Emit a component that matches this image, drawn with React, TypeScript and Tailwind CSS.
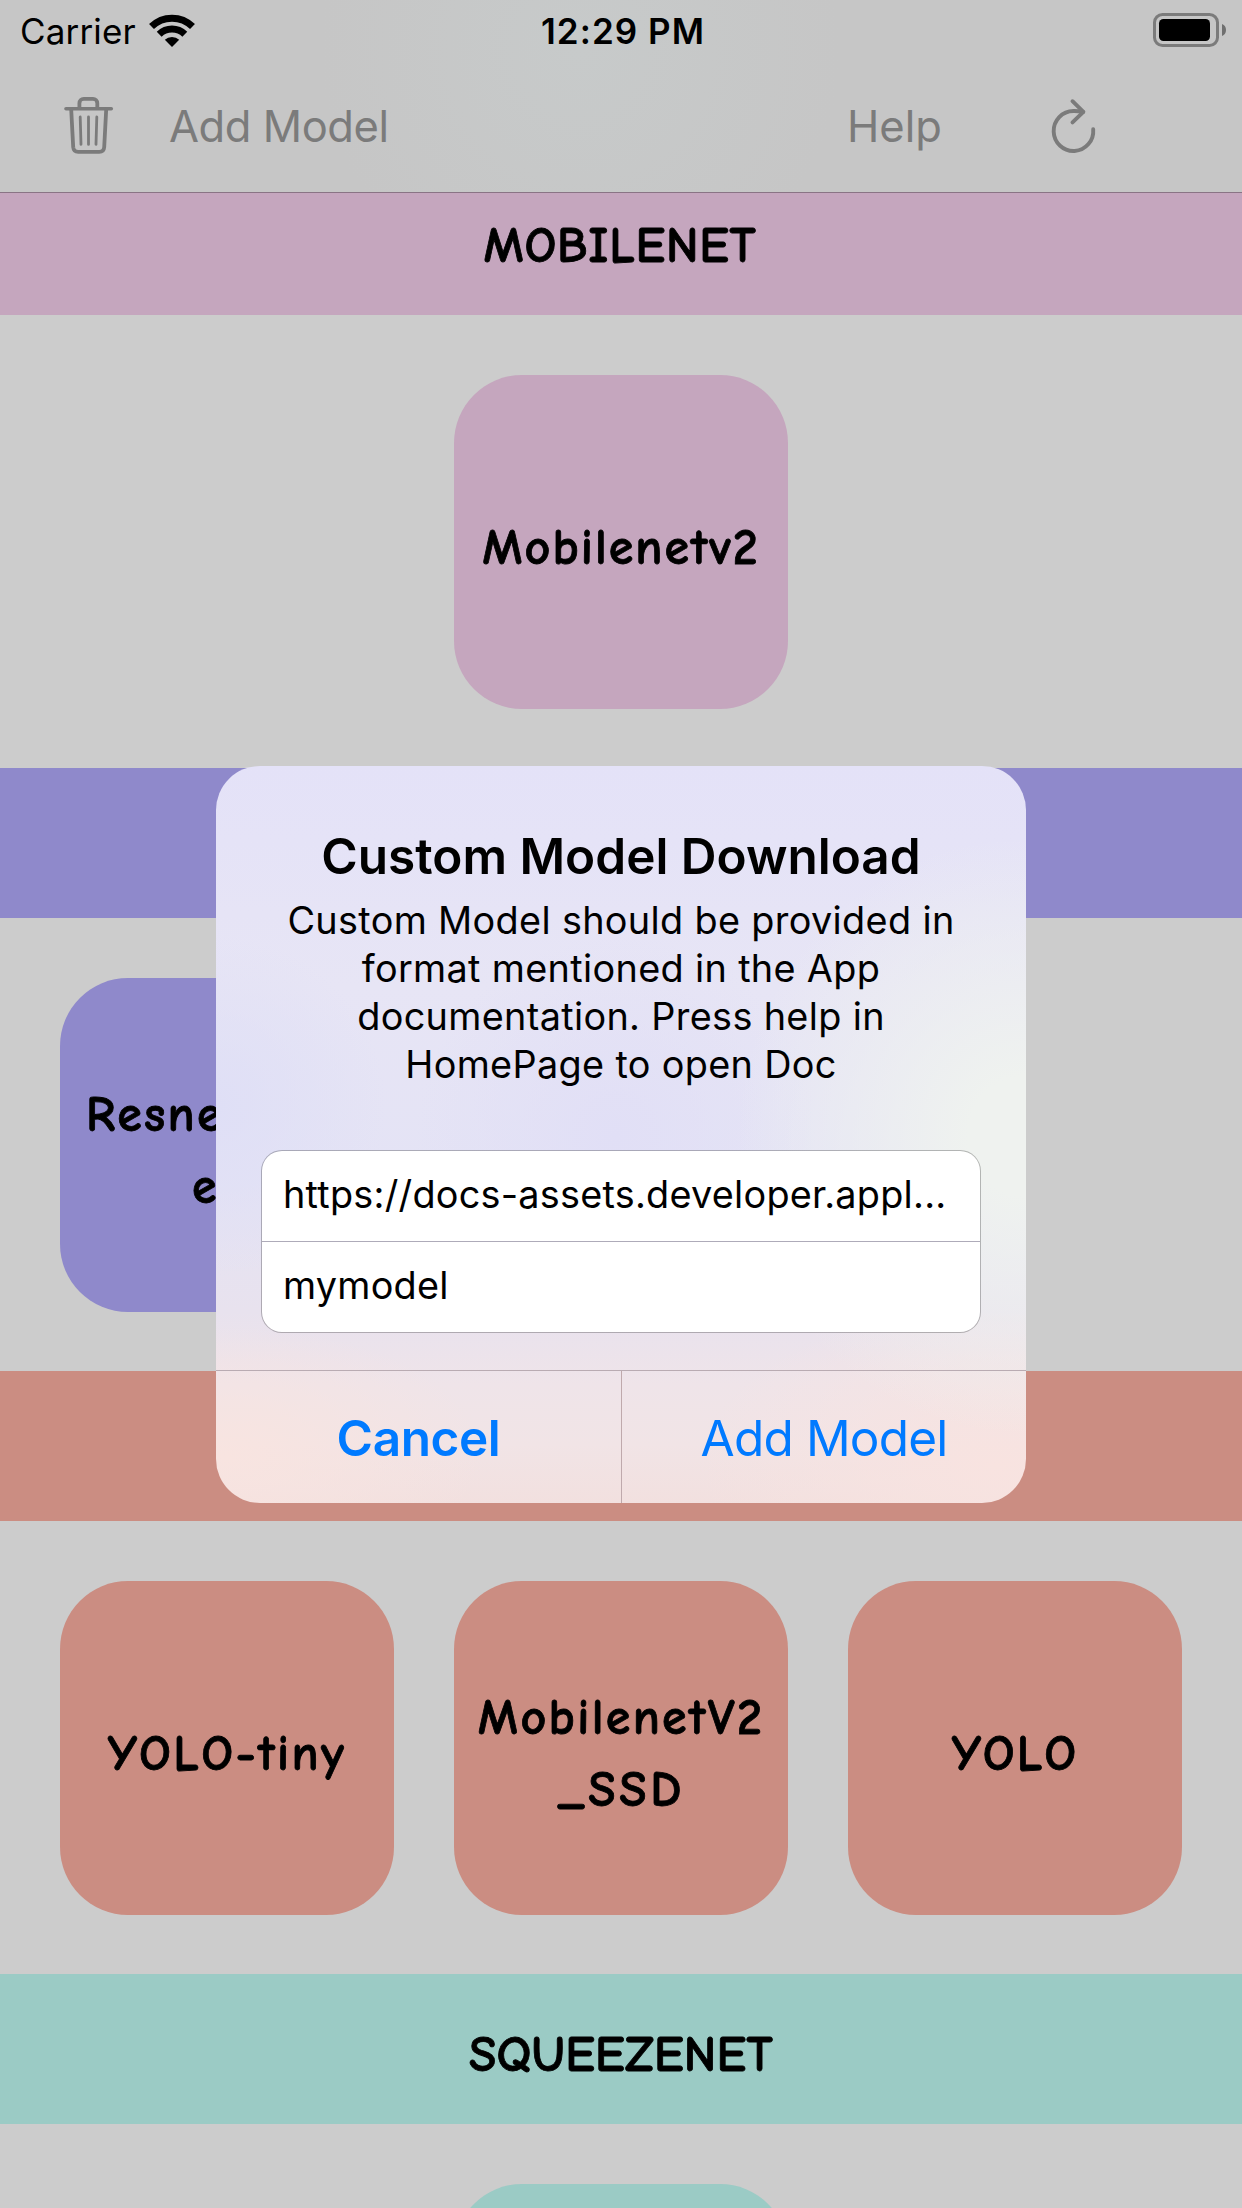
import React from "react";

type Label = { text: string; spacing: string };
type Model = { id: string; lines: Label[]; leading?: boolean };
type Section = {
  id: string;
  title?: Label;
  color: string;
  header: string;
  models: Model[];
};

const sections: Section[] = [
  {
    id: "mobilenet",
    title: { text: "MOBILENET", spacing: "tracking-[0.68px] pr-0.5" },
    color: "bg-[#c5a6be]",
    header: "h-[122px] pb-[17px]",
    models: [{ id: "mobilenetv2", lines: [{ text: "Mobilenetv2", spacing: "tracking-[2.03px]" }] }],
  },
  {
    id: "resnet",
    color: "bg-[#8f89cb]",
    header: "h-[150px]",
    models: [
      {
        id: "resnet",
        leading: true,
        lines: [
          { text: "Resne", spacing: "pl-[26px] tracking-[2.2px]" },
          { text: "e", spacing: "pl-[132px]" },
        ],
      },
    ],
  },
  {
    id: "yolo",
    color: "bg-[#cb8d82]",
    header: "h-[150px]",
    models: [
      { id: "yolo-tiny", lines: [{ text: "YOLO-tiny", spacing: "tracking-[2.35px]" }] },
      {
        id: "mobilenetv2-ssd",
        lines: [
          { text: "MobilenetV2", spacing: "tracking-[2.32px]" },
          { text: "_SSD", spacing: "pl-0.5 tracking-[3.7px]" },
        ],
      },
      { id: "yolo", lines: [{ text: "YOLO", spacing: "tracking-[1.95px]" }] },
    ],
  },
  {
    id: "squeezenet",
    title: { text: "SQUEEZENET", spacing: "tracking-[0.22px]" },
    color: "bg-[#9bcbc5]",
    header: "h-[150px] pt-[12px]",
    models: [{ id: "squeezenet", lines: [] }],
  },
];

function WifiIcon() {
  return (
    <svg width="46" height="33" viewBox="0 0 46 33" fill="none" stroke="#000" strokeWidth="7">
      <path d="M2.5 12.5A29.3 29.3 0 0 1 43.5 12.5" />
      <path d="M10.2 20.2A18.4 18.4 0 0 1 35.8 20.2" />
      <path d="M23 33L15.8 25.8A10.4 10.4 0 0 1 30.2 25.8Z" fill="#000" stroke="none" />
    </svg>
  );
}

function BatteryIcon() {
  return (
    <svg width="73" height="34" viewBox="0 0 73 34">
      <rect x="1.5" y="1.5" width="63" height="31" rx="8" fill="none" stroke="#7b7b7b" strokeWidth="3" />
      <rect x="6" y="6" width="51" height="22" rx="4.5" fill="#000" />
      <path d="M69 11C71.6 12 73 14.3 73 17C73 19.7 71.6 22 69 23Z" fill="#6f6f6f" />
    </svg>
  );
}

function TrashIcon() {
  return (
    <svg width="50" height="60" viewBox="0 0 50 60" fill="none" stroke="#7b7b7b" strokeLinecap="round" strokeLinejoin="round">
      <path d="M2 12.7H47.3" strokeWidth="3.6" />
      <path d="M15.4 12V7.2A4.3 4.3 0 0 1 19.7 2.9H29A4.3 4.3 0 0 1 33.3 7.2V12" strokeWidth="3.8" />
      <path d="M7.2 13.5L9.2 51.2Q9.6 55.9 14.2 55.9H35.3Q39.9 55.9 40.2 51.2L42.2 13.5" strokeWidth="3.8" />
      <path d="M16.2 21L17 48.4M24.5 21V48.4M32.8 21L32 48.4" strokeWidth="2.8" />
    </svg>
  );
}

function RefreshIcon() {
  return (
    <svg width="48" height="56" viewBox="0 0 48 56" fill="none" stroke="#7b7b7b" strokeWidth="3.9" strokeLinecap="round" strokeLinejoin="round">
      <path d="M43.2 31.3A19.8 20 0 1 1 23.4 13Q28 12.9 33 14" />
      <path d="M22.5 3.2L33.4 13.8L22.5 24.4" />
    </svg>
  );
}

function Header() {
  return (
    <header className="flex h-[193px] shrink-0 flex-col border-b border-[#8a7485] bg-[#c6c6c6] bg-[radial-gradient(circle_at_580px_50px,#c7caca_0,#c6c6c6_260px)]">
      <div className="grid h-[60px] grid-cols-[1fr_auto_1fr] items-center pr-4 pl-5 text-[35px] leading-[56px] text-black">
        <div className="flex items-center">
          <span className="w-[129px] pt-0.5 tracking-[0.16px]">Carrier</span>
          <WifiIcon />
        </div>
        <span className="pt-0.5 font-semibold tracking-[1.05px]">12:29 PM</span>
        <div className="flex justify-end">
          <BatteryIcon />
        </div>
      </div>
      <nav className="flex flex-1 items-center pr-[144px] pl-16 text-[43.5px] text-[#7b7b7b]">
        <TrashIcon />
        <span className="ml-[55px] pt-0.5 tracking-[-0.42px]">Add Model</span>
        <span className="ml-auto w-[203px] pt-0.5">Help</span>
        <RefreshIcon />
      </nav>
    </header>
  );
}

const handwritten =
  "font-['Comic_Neue','Open_Sans',sans-serif] text-[50px] leading-[72px] font-bold text-black [font-kerning:none] [-webkit-text-stroke:0.8px_black]";

function ModelCard({ model, color }: { model: Model; color: string }) {
  return (
    <div className={`flex h-[334px] w-[334px] shrink-0 flex-col justify-center rounded-[68px] pt-3 whitespace-nowrap ${model.leading ? "text-left" : "text-center"} ${color} ${handwritten}`}>
      {model.lines.map((line) => (
        <div key={line.text} className={line.spacing}>
          {line.text}
        </div>
      ))}
    </div>
  );
}

function SectionBlock({ section }: { section: Section }) {
  const single = section.models.length === 1 && !section.models[0].leading;
  return (
    <section>
      <h2 className={`flex items-center justify-center ${section.header} ${section.color} ${handwritten}`}>
        {section.title && <span className={section.title.spacing}>{section.title.text}</span>}
      </h2>
      <div className={`flex gap-[60px] px-[60px] pt-[60px] pb-[59px] ${single ? "justify-center" : "justify-start"}`}>
        {section.models.map((model) => (
          <ModelCard key={model.id} model={model} color={section.color} />
        ))}
      </div>
    </section>
  );
}

function DownloadAlert() {
  return (
    <div className="absolute top-[766px] left-[216px] flex h-[737px] w-[810px] flex-col overflow-hidden rounded-[44px] bg-[radial-gradient(ellipse_290px_300px_at_810px_370px,#eff2ef_0,#eff2ef_20%,#eff2ef00_100%),radial-gradient(circle_at_400px_370px,#e1dff6_0,#e1dff600_200px),radial-gradient(circle_at_0px_340px,#dfdff6_0,#dfdff600_170px),radial-gradient(ellipse_260px_130px_at_10px_690px,#f8e4e0_0,#f8e4e000_100%),radial-gradient(ellipse_300px_160px_at_780px_700px,#f8e3e0_0,#f8e3e000_100%),linear-gradient(to_bottom,#e4e2f8_0,#e7e5f5_30%,#e4e3f5_55%,#e8e2ee_74%,#efe4e9_84%,#f1e4e6_92%,#f2e0df_100%)] text-black">
      <div className="flex flex-1 flex-col items-center px-[45px] pt-[60px]">
        <h1 className="text-[49.5px] leading-[60px] font-semibold">Custom Model Download</h1>
        <p className="mt-2.5 text-center text-[37.8px] leading-[48px] tracking-[0.34px] whitespace-nowrap">
          Custom Model should be provided in
          <br />
          format mentioned in the App
          <br />
          documentation. Press help in
          <br />
          HomePage to open Doc
        </p>
        <div className="mt-[62px] flex w-full flex-col overflow-hidden rounded-[21px] border border-black/25 bg-white bg-clip-padding text-[37.8px] tracking-[0.25px]">
          <div className="flex h-[91px] items-center border-b border-[#aeabb9] pb-[3px] pl-[21px]">https://docs-assets.developer.appl...</div>
          <div className="flex h-[90px] items-center pb-[3px] pl-[21px]">mymodel</div>
        </div>
      </div>
      <div className="flex h-[133px] border-t border-[#b9abb2] text-[49.5px] text-[#007aff]">
        <div className="flex w-[405px] items-center justify-center pt-0.5 font-semibold tracking-[-0.4px]">Cancel</div>
        <div className="flex flex-1 items-center justify-center border-l border-[#bfa9ac] pt-0.5 tracking-[-0.83px]">Add Model</div>
      </div>
    </div>
  );
}

export default function App() {
  return (
    <div className="relative flex h-[2208px] w-[1242px] flex-col overflow-hidden bg-[#cccccc] font-['Inter','Liberation_Sans',sans-serif]">
      <Header />
      <main>
        {sections.map((section) => (
          <SectionBlock key={section.id} section={section} />
        ))}
      </main>
      <DownloadAlert />
    </div>
  );
}
